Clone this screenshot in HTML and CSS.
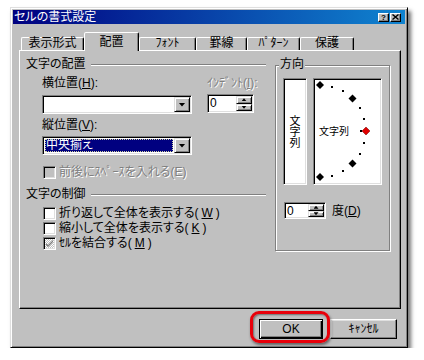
FILE: index.html
```html
<!DOCTYPE html>
<html lang="ja">
<head>
  <meta charset="UTF-8">
  <title>セルの書式設定</title>
  <link rel="stylesheet" href="styles.css">
</head>
<body>
  <div class="dialog">
    <!-- タイトルバー -->
    <div class="titlebar">
      <span class="title">セルの書式設定</span>
      <div class="title-btns">
        <span class="tbtn help">?</span>
        <span class="tbtn">
          <svg width="7" height="6" viewBox="0 0 7 6"><path d="M0.5 0.5L6.5 5.5M6.5 0.5L0.5 5.5" stroke="#000" stroke-width="1.4"/></svg>
        </span>
      </div>
    </div>

    <!-- タブ -->
    <div class="tabs">
      <div class="tab w1">表示形式</div>
      <div class="tab w2 active">配置</div>
      <div class="tab w3">ﾌｫﾝﾄ</div>
      <div class="tab w4">罫線</div>
      <div class="tab w5">ﾊﾟﾀｰﾝ</div>
      <div class="tab w6">保護</div>
    </div>

    <!-- 配置 -->
    <div class="panel">
      <div class="col-left">
        <div class="section-head"><span>文字の配置</span><i class="etch"></i></div>

        <div class="field-row gap5">
          <span class="main">横位置(<u>H</u>):</span>
          <span class="dis">ｲﾝﾃﾞﾝﾄ(<u>I</u>):</span>
        </div>
        <div class="field-row gap5">
          <div class="combo main">
            <span class="combo-val"></span>
            <span class="drop"><i class="tri"></i></span>
          </div>
          <div class="spin indent">
            <span class="spin-val">0</span>
            <span class="spin-btns">
              <span class="sb"><i class="up"></i></span>
              <span class="sb"><i class="down"></i></span>
            </span>
          </div>
        </div>

        <div class="field-row gap4">
          <span class="main">縦位置(<u>V</u>):</span>
        </div>
        <div class="field-row gap4">
          <div class="combo main">
            <span class="combo-val sel">中央揃え</span>
            <span class="drop"><i class="tri"></i></span>
          </div>
        </div>

        <label class="check gap10 dis"><span class="box off"></span>前後にｽﾍﾟｰｽを入れる(E)</label>

        <div class="section-head gap8"><span>文字の制御</span><i class="etch"></i></div>
        <label class="check gap5"><span class="box"></span>折り返して全体を表示する(<u>W</u>)</label>
        <label class="check gap1"><span class="box"></span>縮小して全体を表示する(<u>K</u>)</label>
        <label class="check gap1">
          <span class="box mixed">
            <svg width="9" height="9" viewBox="0 0 9 9"><path d="M1 4l2 2 5-5v2l-5 5-2-2z" fill="#808080"/></svg>
          </span>ｾﾙを結合する(<u>M</u>)
        </label>
      </div>

      <div class="group">
        <span class="legend">方向</span>
        <div class="orient">
          <div class="vtext">文字列</div>
          <div class="dial">
            <svg width="67" height="105" viewBox="0 0 67 105">
              <g fill="#000">
                <polygon points="6,2 10,6 6,10 2,6"/>
                <rect x="17" y="7" width="2" height="2"/>
                <rect x="28" y="11" width="2" height="2"/>
                <polygon points="38.5,15.5 42.5,19.5 38.5,23.5 34.5,19.5"/>
                <rect x="45" y="28" width="2" height="2"/>
                <rect x="49" y="39" width="2" height="2"/>
                <rect x="46" y="51" width="2" height="2"/>
                <rect x="49" y="63" width="2" height="2"/>
                <rect x="45" y="74" width="2" height="2"/>
                <polygon points="38.5,80.5 42.5,84.5 38.5,88.5 34.5,84.5"/>
                <rect x="28" y="91" width="2" height="2"/>
                <rect x="17" y="96" width="2" height="2"/>
                <polygon points="6,94 10,98 6,102 2,98"/>
              </g>
              <polygon points="52,48 56,52 52,56 48,52" fill="#e00000" stroke="#600" stroke-width="0.5"/>
              <text x="5" y="56" font-size="10" font-family="Noto Sans CJK JP, sans-serif">文字列</text>
            </svg>
          </div>
        </div>
        <div class="deg-row">
          <div class="spin deg">
            <span class="spin-val">0</span>
            <span class="spin-btns">
              <span class="sb"><i class="up"></i></span>
              <span class="sb"><i class="down"></i></span>
            </span>
          </div>
          <span class="deg-label">度(<u>D</u>)</span>
        </div>
      </div>
    </div>

    <!-- ボタン -->
    <div class="actions">
      <div class="ok-wrap">
        <button class="btn ok">OK</button>
        <span class="highlight"></span>
      </div>
      <button class="btn cancel">ｷｬﾝｾﾙ</button>
    </div>
  </div>
</body>
</html>
```

FILE: styles.css
```css
* {
  box-sizing: border-box;
  margin: 0;
  padding: 0;
}

body {
  background: #fff;
  font-family: "Liberation Sans", "Noto Sans CJK JP", sans-serif;
  font-size: 12px;
  line-height: 14px;
  font-feature-settings: "palt";
  color: #000;
}

/********* DIALOG *********/
.dialog {
  width: 398px;
  height: 341px;
  margin: 7px 0 0 10px;
  background: #c0c0c0;
  border: 1px solid;
  border-color: #dfdfdf #000 #000 #dfdfdf;
  padding: 2px;
  box-shadow: inset 1px 1px #fff, inset -1px -1px #808080, 3px 4px 4px rgba(0, 0, 0, 0.55);
  display: flex;
  flex-direction: column;
}

.titlebar {
  height: 14px;
  display: flex;
  align-items: center;
  justify-content: space-between;
  background: linear-gradient(to right, #000080, #1084d0);
  color: #fff;
  padding: 0 4px 0 1px;
}

.title {
  line-height: 14px;
}

.title-btns {
  display: flex;
  gap: 1px;
}

.tbtn {
  width: 11px;
  height: 9px;
  background: #c0c0c0;
  border: 1px solid;
  border-color: #fff #000 #000 #fff;
  box-shadow: inset -1px -1px #808080;
  color: #000;
  display: flex;
  align-items: center;
  justify-content: center;
}

.tbtn.help {
  font-size: 8px;
  font-weight: bold;
  line-height: 7px;
}

/********* TABS *********/
.tabs {
  height: 26px;
  display: flex;
  align-items: flex-end;
  padding-left: 8px;
}

.tab {
  height: 13px;
  border: 1px solid;
  border-bottom: 0;
  border-color: #fff #000 transparent #fff;
  border-radius: 2px 2px 0 0;
  box-shadow: inset -1px 0 #808080;
  text-align: center;
  line-height: 11px;
}

.tab.active {
  height: 19px;
  margin-bottom: -1px;
  padding-top: 4px;
  position: relative;
  z-index: 1;
  background: #c0c0c0;
}

.w1 { width: 63px; }
.w2 { width: 55px; }
.w3 { width: 57px; }
.w4 { width: 51px; }
.w5 { width: 53px; }
.w6 { width: 54px; }

/********* PANEL *********/
.panel {
  width: 382px;
  height: 259px;
  margin-left: 6px;
  border: 1px solid;
  border-color: #fff #000 #000 #fff;
  box-shadow: inset -1px -1px #808080;
  padding: 6px 0 0 6px;
  display: flex;
  align-items: flex-start;
  gap: 9px;
}

.col-left {
  width: 240px;
  display: flex;
  flex-direction: column;
}

.section-head {
  height: 14px;
  display: flex;
  align-items: center;
}

.section-head span {
  width: 65px;
}

.etch {
  flex: 1;
  height: 2px;
  margin-top: 2px;
  border-top: 1px solid #808080;
  border-bottom: 1px solid #fff;
}

.gap1 { margin-top: 1px; }
.gap4 { margin-top: 4px; }
.gap5 { margin-top: 5px; }
.gap8 { margin-top: 8px; }
.gap10 { margin-top: 10px; }

.field-row {
  display: flex;
  gap: 15px;
  padding-left: 16px;
  min-height: 14px;
}

.main {
  width: 150px;
}

.dis {
  color: #808080;
  text-shadow: 1px 1px #fff;
}

/* sunken fields */
.combo,
.spin,
.box,
.vtext,
.dial {
  background: #fff;
  border: 1px solid;
  border-color: #808080 #fff #fff #808080;
  box-shadow: inset 1px 1px #000, inset -1px -1px #dfdfdf;
}

.combo {
  height: 19px;
  padding: 1px;
  display: flex;
}

.combo-val {
  flex: 1;
  line-height: 15px;
  padding-left: 1px;
}

.combo-val.sel {
  margin: 1px;
  background: #000080;
  color: #fff;
  line-height: 13px;
  outline: 1px dotted #d0d0a0;
  outline-offset: -1px;
}

/* raised buttons */
.drop,
.sb {
  background: #c0c0c0;
  border: 1px solid;
  border-color: #dfdfdf #000 #000 #dfdfdf;
  box-shadow: inset 1px 1px #fff, inset -1px -1px #808080;
  display: flex;
  align-items: center;
  justify-content: center;
}

.drop {
  width: 16px;
}

.tri {
  width: 7px;
  height: 4px;
  background: #000;
  clip-path: polygon(0 0, 100% 0, 50% 100%);
}

.spin {
  height: 19px;
  padding: 1px;
  display: flex;
}

.spin.indent {
  width: 47px;
  margin-top: -1px;
}

.spin.deg {
  width: 42px;
  height: 17px;
}

.spin-val {
  flex: 1;
  padding-left: 1px;
  line-height: 14px;
}

.spin-btns {
  width: 16px;
  display: flex;
  flex-direction: column;
}

.sb {
  flex: 1;
}

.up,
.down {
  width: 5px;
  height: 3px;
  background: #000;
}

.up { clip-path: polygon(50% 0, 100% 100%, 0 100%); }
.down { clip-path: polygon(0 0, 100% 0, 50% 100%); }

/* checkboxes */
.check {
  height: 14px;
  padding-left: 17px;
  display: flex;
  align-items: center;
  gap: 3px;
}

.box {
  width: 13px;
  height: 13px;
  display: flex;
  align-items: center;
  justify-content: center;
}

.box.off {
  background: #c0c0c0;
}

.box.mixed {
  background: repeating-conic-gradient(#c0c0c0 0 25%, #fff 0 50%) 0 0 / 2px 2px;
}

/********* 方向 *********/
.group {
  width: 115px;
  margin-top: 8px;
  border: 1px solid #808080;
  box-shadow: inset 1px 1px #fff, 1px 1px #fff;
  padding: 0 7px 31px 7px;
  display: flex;
  flex-direction: column;
  align-items: flex-start;
}

.legend {
  margin: -9px 0 0 -4px;
  padding: 0 1px;
  background: #c0c0c0;
}

.orient {
  margin-top: 7px;
  display: flex;
  gap: 6px;
}

.vtext {
  width: 24px;
  height: 107px;
  font-family: "Noto Sans CJK JP", sans-serif;
  font-size: 11px;
  writing-mode: vertical-rl;
  text-orientation: upright;
  display: flex;
  align-items: center;
  justify-content: center;
}

.dial {
  width: 69px;
  height: 107px;
  display: flex;
}

.deg-row {
  margin: 17px 0 0 1px;
  display: flex;
  align-items: center;
  gap: 6px;
}

/********* BOTTONS *********/
.actions {
  flex: 1;
  display: flex;
  justify-content: flex-end;
  align-items: flex-start;
  gap: 7px;
  padding: 10px 8px 0 0;
}

.ok-wrap {
  position: relative;
  display: flex;
}

.btn {
  height: 20px;
  background: #c0c0c0;
  font-family: "Liberation Sans", "Noto Sans CJK JP", sans-serif;
  font-size: 12px;
  line-height: 16px;
  color: #000;
  border: 1px solid;
}

.btn.ok {
  width: 64px;
  border-color: #000;
  box-shadow: inset 1px 1px #fff, inset -1px -1px #000, inset -2px -2px #808080;
}

.btn.cancel {
  width: 67px;
  border-color: #fff #000 #000 #fff;
  box-shadow: inset -1px -1px #808080, inset 1px 1px #dfdfdf;
}

.highlight {
  position: absolute;
  left: -9px;
  top: -8px;
  width: 80px;
  height: 32px;
  border: 3px solid #e8000a;
  border-radius: 9px;
  box-shadow: 1px 2px 3px rgba(0, 0, 0, 0.5), inset 1px 1px 2px rgba(0, 0, 0, 0.45);
}
```
